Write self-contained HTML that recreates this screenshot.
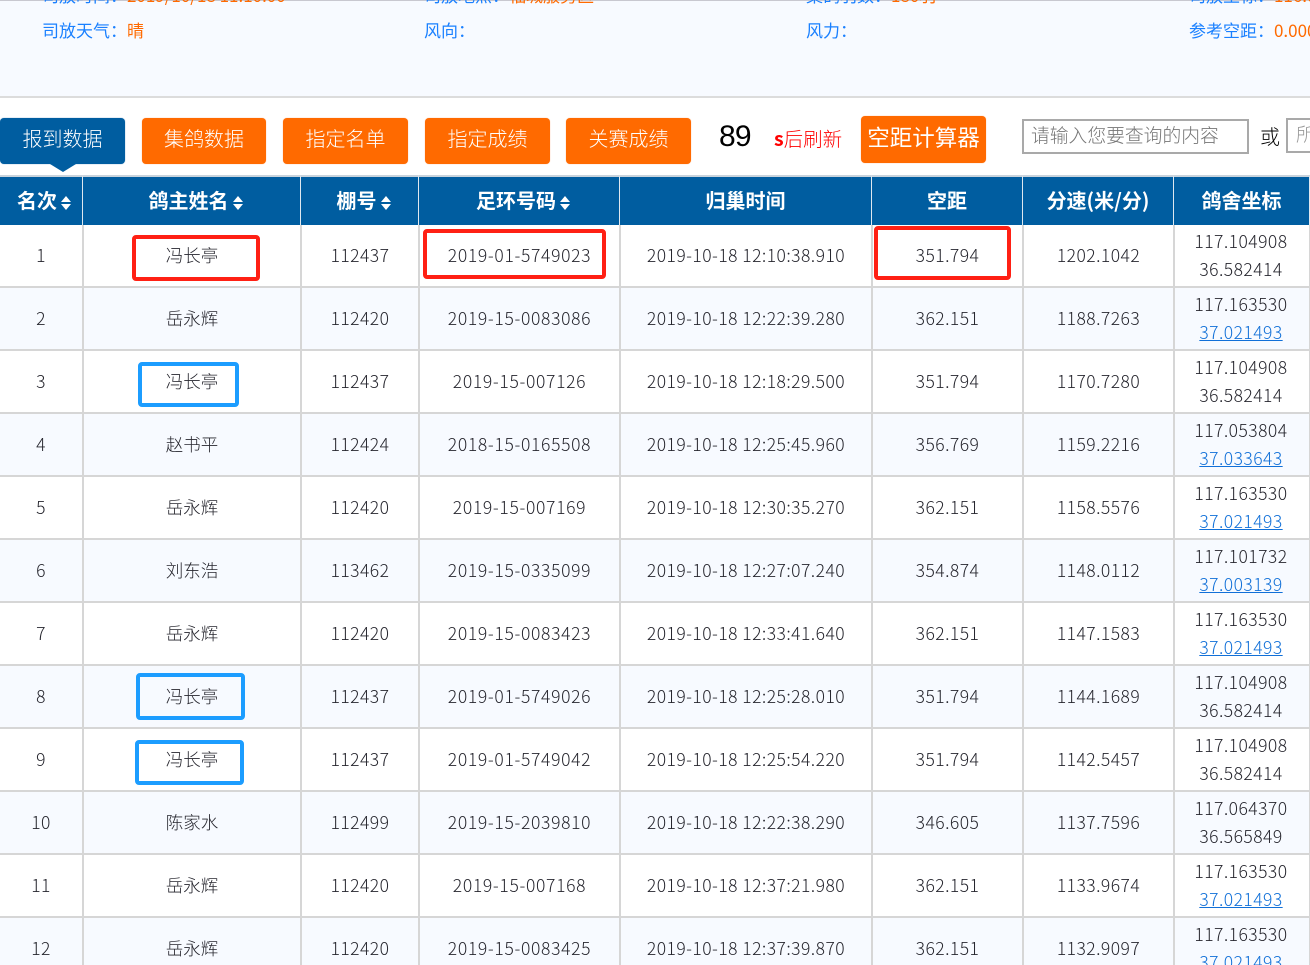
<!DOCTYPE html>
<html lang="zh"><head><meta charset="utf-8"><title>报到数据</title>
<style>
html{margin:0;padding:0;height:965px;overflow:hidden;background:#fff}
body{margin:0;padding:0;background:#fff;width:1310px;height:965px;position:relative;overflow:hidden;font-family:"Liberation Sans","Noto Sans CJK SC",sans-serif;color:#333}
.top{position:absolute;left:0;top:0;width:1310px;height:96px;background:#f7faff;border-bottom:2px solid #dcdcdc;box-sizing:content-box}
.topline{position:absolute;left:0;top:0;width:1310px;height:1px;background:#c8c8d0}
.i{position:absolute;font-size:17px;line-height:24px;color:#1a80ff;white-space:nowrap;font-family:"Noto Sans CJK SC",sans-serif;font-weight:400}
.i b{font-weight:400;color:#ff6a00}
.btn{position:absolute;top:118px;height:46px;line-height:40px;width:125px;text-align:center;background:#ff6a00;color:#fff;font-size:20px;border-radius:4px;font-family:"Noto Sans CJK SC",sans-serif;font-weight:300;box-shadow:0 0 1px #ffb080}
.on{background:#005da0;box-shadow:0 0 1px #5f93c0}
.caret{position:absolute;left:50px;top:164px;width:0;height:0;border-left:13px solid transparent;border-right:13px solid transparent;border-top:8px solid #005da0}
.inp{position:absolute;box-sizing:border-box;border:2px solid #a9a9a9;background:#fff;color:#757575;font-size:18.8px;line-height:27px;padding-left:7px;white-space:nowrap;overflow:hidden;font-family:"Noto Sans CJK SC",sans-serif;font-weight:300}
table{position:absolute;left:0;top:175px;border-collapse:separate;border-spacing:0;table-layout:fixed;width:1310px;font-family:"Noto Sans CJK SC",sans-serif;font-size:17.5px}
th{background:#005da0;color:#fff;font-size:20px;font-weight:700;height:45px;padding:0 0 3px;border-top:2px solid #c9d3dc;border-right:1px solid #dfe8f0;box-sizing:content-box;text-align:center;white-space:nowrap}
th span{position:relative;left:4px}
th:first-child span{left:3px}
td{height:61px;padding:0;border-right:1px solid #d6d6d6;border-bottom:2px solid #d6d6d6;box-sizing:content-box;text-align:center;line-height:28px;color:#26262e;font-weight:300;white-space:nowrap;vertical-align:middle;letter-spacing:.45px}
td+td{border-left:1px solid #d6d6d6}
td:nth-child(2){letter-spacing:0}
td:nth-child(4){letter-spacing:.67px}
td:nth-child(8){padding-right:2px}
tr:nth-child(even) td{background:#f7faff}
a{color:#1170d8;text-decoration:underline}
.s{display:inline-block;width:10px;height:14px;position:relative;vertical-align:-2px;margin-left:4px}
.s:before,.s:after{content:"";position:absolute;left:0;border-left:5px solid transparent;border-right:5px solid transparent}
.s:before{top:0;border-bottom:6px solid #fff}
.s:after{bottom:0;border-top:6px solid #fff}
.box{position:absolute;box-sizing:border-box;border:4px solid #ff2014;border-radius:4px}
.blue{border-color:#1c9dff}
</style></head><body>
<div class="top"></div><div class="topline"></div>
<div class="i" style="left:42px;top:-17px">司放时间：<b>2019/10/18 11:10:00</b></div>
<div class="i" style="left:424px;top:-17px">司放地点：<b>福城服务区</b></div>
<div class="i" style="left:806px;top:-17px">集鸽羽数：<b>180羽</b></div>
<div class="i" style="left:1189px;top:-17px">司放坐标：<b>116.000000</b></div>
<div class="i" style="left:42px;top:18px">司放天气：<b>晴</b></div>
<div class="i" style="left:424px;top:18px">风向：</div>
<div class="i" style="left:806px;top:18px">风力：</div>
<div class="i" style="left:1189px;top:18px">参考空距：<b>0.000</b></div>

<div class="btn on" style="left:0">报到数据</div><div class="caret"></div>
<div class="btn" style="left:142px;width:124px">集鸽数据</div>
<div class="btn" style="left:283px">指定名单</div>
<div class="btn" style="left:425px">指定成绩</div>
<div class="btn" style="left:566px">关赛成绩</div>
<div style="position:absolute;left:719px;top:120px;font-size:30px;line-height:34px;color:#000;letter-spacing:-.8px">89</div>
<div style="position:absolute;left:774px;top:124px;font-size:19.5px;line-height:28px;color:#f00;font-family:'Noto Sans CJK SC',sans-serif;font-weight:300;white-space:nowrap"><span style="font-weight:700">s</span>后刷新</div>
<div class="btn" style="left:861px;top:116px;height:47px;line-height:43px;font-size:22.5px;font-weight:400">空距计算器</div>
<div class="inp" style="left:1022px;top:119px;width:227px;height:35px">请输入您要查询的内容</div>
<div style="position:absolute;left:1260px;top:122px;font-size:20px;line-height:28px;color:#000;font-family:'Noto Sans CJK SC',sans-serif;font-weight:300">或</div>
<div class="inp" style="left:1286px;top:118px;width:40px;height:35px;padding-left:8px;color:#999">所</div>

<table>
<colgroup><col style="width:83px"><col style="width:218px"><col style="width:118px"><col style="width:201px"><col style="width:252px"><col style="width:151px"><col style="width:151px"><col style="width:136px"></colgroup>
<thead><tr><th><span>名次<i class="s"></i></span></th><th><span>鸽主姓名<i class="s"></i></span></th><th><span>棚号<i class="s"></i></span></th><th><span>足环号码<i class="s"></i></span></th><th>归巢时间</th><th>空距</th><th>分速(米/分)</th><th>鸽舍坐标</th></tr></thead>
<tbody>
<tr><td>1</td><td>冯长亭</td><td>112437</td><td>2019-01-5749023</td><td>2019-10-18 12:10:38.910</td><td>351.794</td><td>1202.1042</td><td>117.104908<br>36.582414</td></tr>
<tr><td>2</td><td>岳永辉</td><td>112420</td><td>2019-15-0083086</td><td>2019-10-18 12:22:39.280</td><td>362.151</td><td>1188.7263</td><td>117.163530<br><a>37.021493</a></td></tr>
<tr><td>3</td><td>冯长亭</td><td>112437</td><td>2019-15-007126</td><td>2019-10-18 12:18:29.500</td><td>351.794</td><td>1170.7280</td><td>117.104908<br>36.582414</td></tr>
<tr><td>4</td><td>赵书平</td><td>112424</td><td>2018-15-0165508</td><td>2019-10-18 12:25:45.960</td><td>356.769</td><td>1159.2216</td><td>117.053804<br><a>37.033643</a></td></tr>
<tr><td>5</td><td>岳永辉</td><td>112420</td><td>2019-15-007169</td><td>2019-10-18 12:30:35.270</td><td>362.151</td><td>1158.5576</td><td>117.163530<br><a>37.021493</a></td></tr>
<tr><td>6</td><td>刘东浩</td><td>113462</td><td>2019-15-0335099</td><td>2019-10-18 12:27:07.240</td><td>354.874</td><td>1148.0112</td><td>117.101732<br><a>37.003139</a></td></tr>
<tr><td>7</td><td>岳永辉</td><td>112420</td><td>2019-15-0083423</td><td>2019-10-18 12:33:41.640</td><td>362.151</td><td>1147.1583</td><td>117.163530<br><a>37.021493</a></td></tr>
<tr><td>8</td><td>冯长亭</td><td>112437</td><td>2019-01-5749026</td><td>2019-10-18 12:25:28.010</td><td>351.794</td><td>1144.1689</td><td>117.104908<br>36.582414</td></tr>
<tr><td>9</td><td>冯长亭</td><td>112437</td><td>2019-01-5749042</td><td>2019-10-18 12:25:54.220</td><td>351.794</td><td>1142.5457</td><td>117.104908<br>36.582414</td></tr>
<tr><td>10</td><td>陈家水</td><td>112499</td><td>2019-15-2039810</td><td>2019-10-18 12:22:38.290</td><td>346.605</td><td>1137.7596</td><td>117.064370<br>36.565849</td></tr>
<tr><td>11</td><td>岳永辉</td><td>112420</td><td>2019-15-007168</td><td>2019-10-18 12:37:21.980</td><td>362.151</td><td>1133.9674</td><td>117.163530<br><a>37.021493</a></td></tr>
<tr><td>12</td><td>岳永辉</td><td>112420</td><td>2019-15-0083425</td><td>2019-10-18 12:37:39.870</td><td>362.151</td><td>1132.9097</td><td>117.163530<br><a>37.021493</a></td></tr>
</tbody></table>

<div class="box" style="left:132px;top:235px;width:128px;height:46px"></div>
<div class="box" style="left:423px;top:229px;width:183px;height:50px"></div>
<div class="box" style="left:874px;top:226px;width:137px;height:54px"></div>
<div class="box blue" style="left:138px;top:362px;width:101px;height:45px"></div>
<div class="box blue" style="left:136px;top:673px;width:109px;height:47px"></div>
<div class="box blue" style="left:135px;top:740px;width:109px;height:45px"></div>
</body></html>
